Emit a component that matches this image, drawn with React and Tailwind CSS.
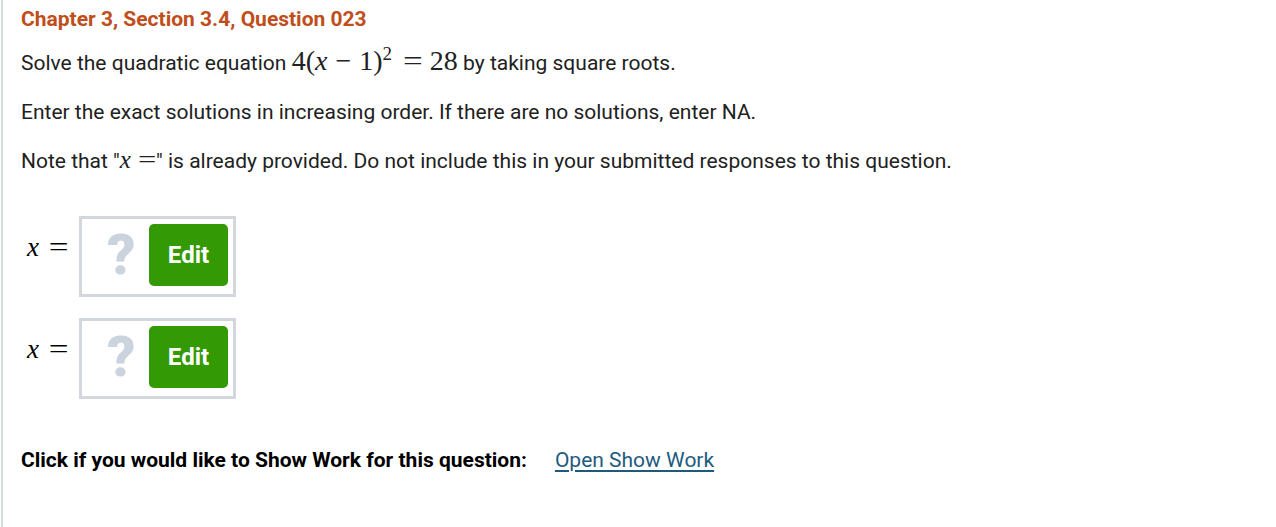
import React from 'react';

const serif = { fontFamily: '"Liberation Serif", "Times New Roman", serif' };

const AnswerRow = () => (
  <div className="flex items-start">
    <div className="w-[58px] h-[81px] pt-[17px] pl-[6px] text-[27px] leading-[28px] text-black whitespace-nowrap" style={serif}>
      <span className="italic">x</span>
      <span className="inline-block ml-[12px] scale-x-[1.3]">=</span>
    </div>
    <div className="flex items-center w-[157px] h-[81px] border-[3px] border-[#d3d7dd] bg-white pl-[25px] pb-[3px]">
      <span className="w-[28px] text-center text-[56px] font-black leading-none text-[#cbd3de]">?</span>
      <button className="ml-[14px] w-[79px] h-[62px] rounded-[5px] bg-[#339a05] text-white text-[24px] font-bold">
        Edit
      </button>
    </div>
  </div>
);

export default function App() {
  return (
    <div className="min-h-[527px] bg-white border-l-2 border-[#d5dbe2] ml-[1px] pl-[18px] pt-[6px] text-[#212121]" style={{ fontFamily: 'Roboto, "Liberation Sans", sans-serif' }}>
      <h1 className="h-[26px] text-[21px] font-bold leading-[26px] text-[#c04e1b] whitespace-nowrap">Chapter 3, Section 3.4, Question 023</h1>

      <p className="mt-[15px] h-[26px] text-[21px] leading-[26px] whitespace-nowrap">
        Solve the quadratic equation{' '}
        <span className="text-[28px] leading-none" style={serif}>
          4(<span className="italic">x</span>
          <span className="mx-[8px]">−</span>1)
          <span className="inline-block align-top text-[19px] leading-none -mt-[3px]">2</span>
          <span className="inline-block ml-[13px] mr-[9px] scale-x-[1.25]">=</span>28
        </span>{' '}
        by taking square roots.
      </p>

      <p className="mt-[26px] h-[26px] text-[21px] leading-[26px] whitespace-nowrap">
        Enter the exact solutions in increasing order. If there are no solutions, enter NA.
      </p>

      <p className="mt-[22px] h-[26px] text-[21px] leading-[26px] whitespace-nowrap">
        Note that "<span className="italic text-[25px] leading-none" style={serif}>x</span>
        <span className="inline-block ml-[9px] mr-[2px] text-[25px] leading-none scale-x-[1.3]" style={serif}>=</span>" is already provided. Do not include this in your submitted responses to this question.
      </p>

      <div className="mt-[43px] flex flex-col gap-[21px]">
        <AnswerRow />
        <AnswerRow />
      </div>

      <div className="mt-[48px] h-[26px] flex items-baseline text-[21px] leading-[26px] whitespace-nowrap">
        <span className="font-bold text-black">Click if you would like to Show Work for this question:</span>
        <a href="#" className="ml-[28px] text-[#1d5b7e] underline underline-offset-[3px]">Open Show Work</a>
      </div>
    </div>
  );
}
